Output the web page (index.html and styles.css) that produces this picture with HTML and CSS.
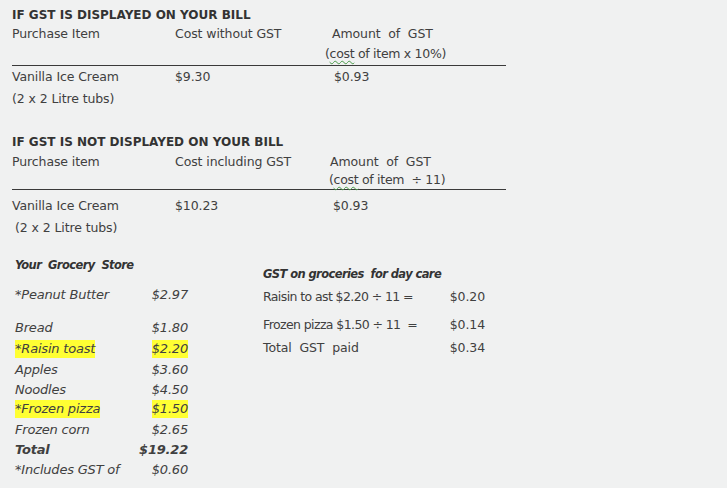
FILE: index.html
```html
<!DOCTYPE html>
<html>
<head>
<meta charset="utf-8">
<link rel="stylesheet" href="styles.css">
</head>
<body>
<div class="page">
  <section class="gst s1">
    <h2 class="title">IF GST IS DISPLAYED ON YOUR BILL</h2>
    <div class="head">
      <div class="row r-h1"><span>Purchase Item</span><span>Cost without GST</span><span class="c3">Amount&nbsp; of&nbsp; GST</span></div>
      <div class="row r-h2"><span></span><span></span><span class="c3b">(<u class="sq">cost</u> of item x 10%)</span></div>
    </div>
    <div class="row r-d1"><span>Vanilla Ice Cream</span><span>$9.30</span><span class="c3d">$0.93</span></div>
    <div class="row r-d2"><span>(2 x 2 Litre tubs)</span></div>
  </section>

  <section class="gst s2">
    <h2 class="title">IF GST IS NOT DISPLAYED ON YOUR BILL</h2>
    <div class="head">
      <div class="row r-h1b"><span>Purchase item</span><span>Cost including GST</span><span class="c3e">Amount&nbsp; of&nbsp; GST</span></div>
      <div class="row r-h2b"><span></span><span></span><span class="c3f">(<u class="sq">cost</u> of item&nbsp; ÷ 11)</span></div>
    </div>
    <div class="row r-d1b"><span>Vanilla Ice Cream</span><span>$10.23</span><span class="c3g">$0.93</span></div>
    <div class="row r-d2"><span class="ind">(2 x 2 Litre tubs)</span></div>
  </section>

  <section class="grocery">
    <div class="store">
      <h3 class="gt">Your&nbsp; Grocery&nbsp; Store</h3>
      <div class="gi pb"><span>*Peanut Butter</span><span>$2.97</span></div>
      <div class="gi bread"><span>Bread</span><span>$1.80</span></div>
      <div class="gi"><span class="hl">*Raisin toast</span><span class="hl">$2.20</span></div>
      <div class="gi"><span>Apples</span><span>$3.60</span></div>
      <div class="gi"><span>Noodles</span><span>$4.50</span></div>
      <div class="gi"><span class="hl">*Frozen pizza</span><span class="hl">$1.50</span></div>
      <div class="gi"><span>Frozen corn</span><span>$2.65</span></div>
      <div class="gi total"><span>Total</span><span>$19.22</span></div>
      <div class="gi"><span>*Includes GST of</span><span>$0.60</span></div>
    </div>
    <div class="daycare">
      <h3 class="dt">GST on groceries&nbsp; for day care</h3>
      <div class="dr d1"><span class="fx">Raisin to ast $2.20 ÷ 11 =</span><span>$0.20</span></div>
      <div class="dr d2"><span class="fx">Frozen pizza $1.50 ÷ 11&nbsp; =</span><span>$0.14</span></div>
      <div class="dr"><span>Total&nbsp; GST&nbsp; paid</span><span>$0.34</span></div>
    </div>
  </section>
</div>
</body>
</html>
```

FILE: styles.css
```css
html, body {
  margin: 0;
  padding: 0;
  background: #f0f1f1;
}
body {
  width: 727px;
  height: 488px;
  overflow: hidden;
  font-family: "DejaVu Sans", "Liberation Sans", sans-serif;
  color: #404040;
  font-size: 12px;
}
.page {
  padding: 6px 0 0 12px;
}
.title {
  margin: 0;
  font-size: 12px;
  font-weight: bold;
  line-height: 18px;
  color: #333;
  letter-spacing: 0;
}
.gst { width: 494px; }
.row {
  display: grid;
  grid-template-columns: 163px 157px 1fr;
  line-height: 20px;
  white-space: nowrap;
  font-size: 12.5px;
  letter-spacing: -0.1px;
}
.head { border-bottom: 1.5px solid #3a3a3a; }
.r-h1 { height: 20px; }
.r-h2 { height: 21px; }
.r-d1 { height: 22px; line-height: 22px; }
.r-d2 { height: 22px; line-height: 22px; }
.c3b { margin-left: -7px; letter-spacing: -0.3px; }
.c3d { padding-left: 2px; }
.s2 { margin-top: 23px; }
.r-h1b { height: 22px; line-height: 22px; }
.r-h2b { height: 16px; line-height: 14px; }
.c3e { margin-left: -2px; }
.c3f { margin-left: -3px; letter-spacing: -0.3px; }
.r-d1b { height: 27px; line-height: 31px; }
.c3g { margin-left: 1px; }
.ind { padding-left: 3px; }
.sq {
  text-decoration: underline wavy #4a9a4a;
  text-decoration-thickness: 1px;
  text-underline-offset: 2px;
}
.grocery {
  display: flex;
  margin-top: 16px;
}
.store {
  width: 173px;
  padding-left: 3px;
  font-style: italic;
}
.gt, .dt {
  margin: 0;
  font-size: 11.5px;
  font-weight: bold;
  font-style: italic;
  line-height: 20px;
  color: #333;
  letter-spacing: -0.6px;
}
.gi {
  display: flex;
  justify-content: space-between;
  align-items: center;
  height: 20px;
  font-size: 13px;
  letter-spacing: -0.2px;
  white-space: nowrap;
}
.pb { margin-top: 9px; }
.bread { margin-top: 12px; height: 23px; }
.total { font-weight: bold; }
.hl { background: #ffff33; line-height: 18px; }
.daycare {
  margin-left: 75px;
  padding-top: 9px;
  width: 222px;
}
.dr {
  display: flex;
  justify-content: space-between;
  height: 23px;
  line-height: 23px;
  font-size: 12.5px;
  letter-spacing: -0.1px;
  white-space: nowrap;
}
.fx { letter-spacing: -0.6px; }
.d1 { height: 29px; line-height: 25px; }
```
